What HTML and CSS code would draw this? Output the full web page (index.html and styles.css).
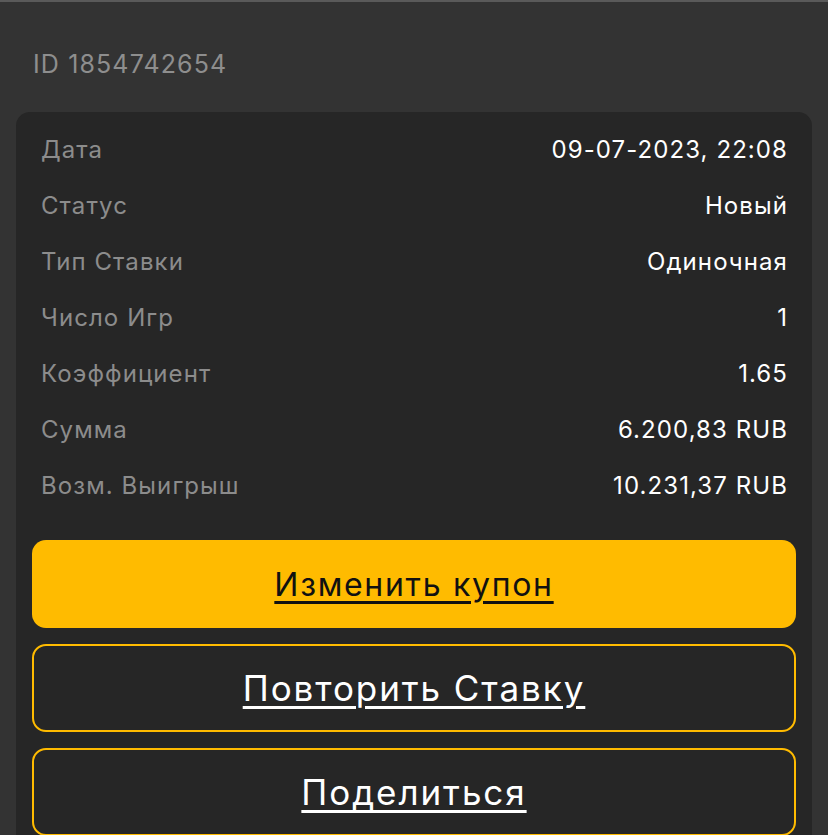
FILE: index.html
```html
<!DOCTYPE html>
<html lang="ru">
<head>
<meta charset="utf-8">
<link rel="stylesheet" href="styles.css">
</head>
<body>
<div class="page">
  <div class="bet-id">ID 1854742654</div>
  <div class="card">
    <div class="rows">
      <div class="row"><span class="label">Дата</span><span class="value">09-07-2023, 22:08</span></div>
      <div class="row"><span class="label">Статус</span><span class="value">Новый</span></div>
      <div class="row"><span class="label">Тип Ставки</span><span class="value">Одиночная</span></div>
      <div class="row"><span class="label">Число Игр</span><span class="value">1</span></div>
      <div class="row"><span class="label">Коэффициент</span><span class="value">1.65</span></div>
      <div class="row"><span class="label">Сумма</span><span class="value">6.200,83 RUB</span></div>
      <div class="row"><span class="label">Возм. Выигрыш</span><span class="value">10.231,37 RUB</span></div>
    </div>
    <div class="actions">
      <a class="btn btn-primary" href="#">Изменить купон</a>
      <a class="btn btn-outline" href="#">Повторить Ставку</a>
      <a class="btn btn-outline" href="#">Поделиться</a>
    </div>
  </div>
</div>
</body>
</html>
```
FILE: styles.css
```css
html, body {
  margin: 0;
  padding: 0;
  background: #333333;
}
body {
  font-family: Inter, "Noto Sans", Roboto, sans-serif;
  height: 835px;
  overflow: hidden;
}
.page {
  border-top: 2px solid #5a5a5a;
}
.bet-id {
  padding: 46px 0 32px 33px;
  font-size: 25px;
  line-height: 32px;
  letter-spacing: 0.045em;
  color: #8e8e8e;
}
.card {
  margin: 0 16px;
  background: #262626;
  border-radius: 14px;
  padding: 9px 16px 40px;
}
.rows {
  padding: 0 9px 0 9px;
}
.row {
  display: flex;
  justify-content: space-between;
  align-items: center;
  height: 56px;
  font-size: 24px;
  letter-spacing: 0.045em;
}
.label {
  color: #8c8c8c;
}
.value {
  color: #ffffff;
  margin-right: -1px;
}
.actions {
  margin-top: 27px;
  display: flex;
  flex-direction: column;
  gap: 16px;
}
.btn {
  display: flex;
  align-items: center;
  justify-content: center;
  height: 88px;
  box-sizing: border-box;
  border-radius: 14px;
  font-size: 32px;
  letter-spacing: 0.053em;
  text-decoration: underline;
  text-decoration-thickness: 3px;
  text-underline-offset: 5px;
}
.btn-primary {
  background: #ffbb00;
  color: #111111;
}
.btn-outline {
  border: 2px solid #ffbb00;
  color: #ffffff;
  font-size: 35px;
  letter-spacing: 0.055em;
}
```
